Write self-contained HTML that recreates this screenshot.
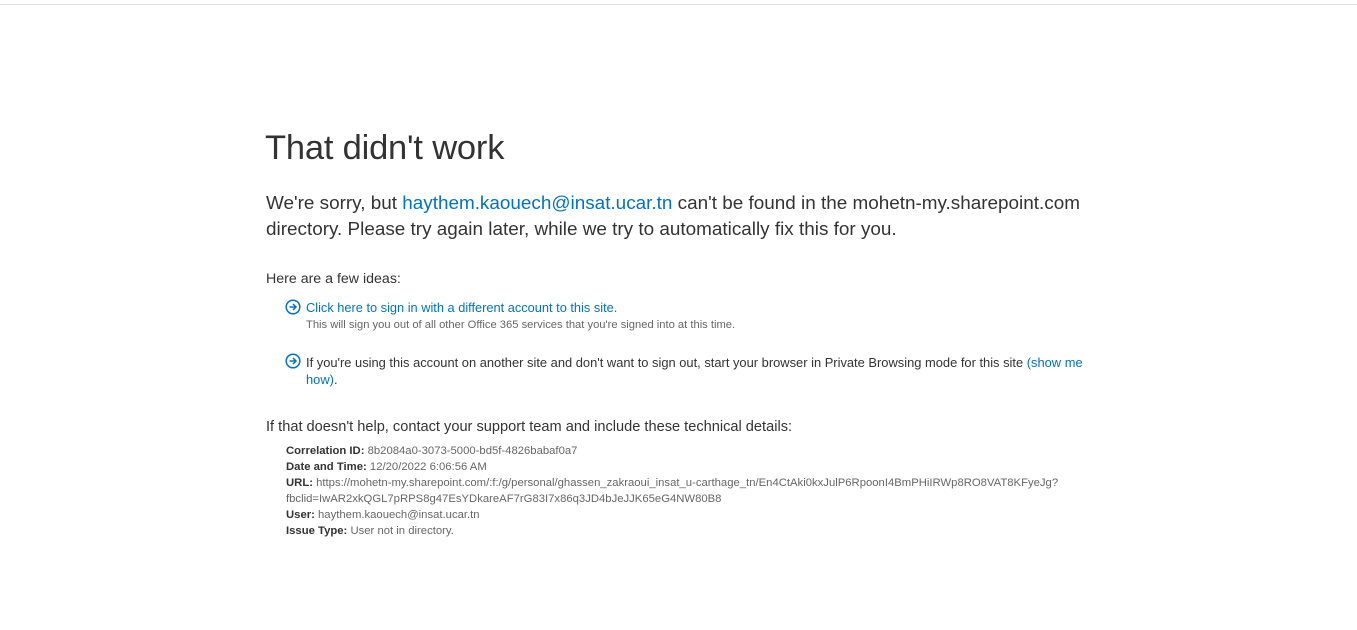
<!DOCTYPE html>
<html><head><meta charset="utf-8"><style>
body{margin:0;width:1357px;height:630px;background:#fff;font-family:"Liberation Sans",sans-serif;color:#333;position:relative;overflow:hidden}
.topline{position:absolute;left:0;top:4px;width:1357px;height:1px;background:#e1e1e1}
.a{position:absolute;white-space:nowrap}
.blue{color:#0072c6}
.icon{position:absolute;width:16px;height:16px}
b{font-weight:bold;color:#333}
.det{font-size:11.3px;color:#666;line-height:16px}
</style></head><body>
<div class="topline"></div>
<div class="a" style="left:265px;top:129px;font-size:34.5px;font-weight:300;color:#333;letter-spacing:-0.2px">That didn't work</div>
<div class="a" style="left:266px;top:191px;font-size:18.9px;line-height:26px;color:#333">We're sorry, but <span class="blue">haythem.kaouech@insat.ucar.tn</span> can't be found in the mohetn-my.sharepoint.com<br>directory. Please try again later, while we try to automatically fix this for you.</div>
<div class="a" style="left:266px;top:271px;font-size:14.2px;color:#333">Here are a few ideas:</div>
<svg class="icon" style="left:285px;top:299px" viewBox="0 0 16 16"><circle cx="8" cy="8" r="6.8" fill="none" stroke="#0072c6" stroke-width="1.5"/><path d="M4.5 8h6.5M8 5l3 3-3 3" fill="none" stroke="#0072c6" stroke-width="1.5"/></svg>
<div class="a blue" style="left:306px;top:300px;font-size:12.8px">Click here to sign in with a different account to this site.</div>
<div class="a" style="left:306px;top:319px;font-size:11.2px;color:#666">This will sign you out of all other Office 365 services that you're signed into at this time.</div>
<svg class="icon" style="left:285px;top:353px" viewBox="0 0 16 16"><circle cx="8" cy="8" r="6.8" fill="none" stroke="#0072c6" stroke-width="1.5"/><path d="M4.5 8h6.5M8 5l3 3-3 3" fill="none" stroke="#0072c6" stroke-width="1.5"/></svg>
<div class="a" style="left:306px;top:354px;font-size:12.9px;line-height:17px;color:#333">If you're using this account on another site and don't want to sign out, start your browser in Private Browsing mode for this site <span class="blue">(show me</span><br><span class="blue">how)</span>.</div>
<div class="a" style="left:266px;top:419px;font-size:14.6px;color:#333">If that doesn't help, contact your support team and include these technical details:</div>
<div class="a det" style="left:286px;top:443px">
<b>Correlation ID:</b> 8b2084a0-3073-5000-bd5f-4826babaf0a7<br>
<b>Date and Time:</b> 12/20/2022 6:06:56 AM<br>
<b>URL:</b> https://mohetn-my.sharepoint.com/:f:/g/personal/ghassen_zakraoui_insat_u-carthage_tn/En4CtAki0kxJulP6RpoonI4BmPHiIRWp8RO8VAT8KFyeJg?<br>
fbclid=IwAR2xkQGL7pRPS8g47EsYDkareAF7rG83I7x86q3JD4bJeJJK65eG4NW80B8<br>
<b>User:</b> haythem.kaouech@insat.ucar.tn<br>
<b>Issue Type:</b> User not in directory.
</div>
</body></html>
